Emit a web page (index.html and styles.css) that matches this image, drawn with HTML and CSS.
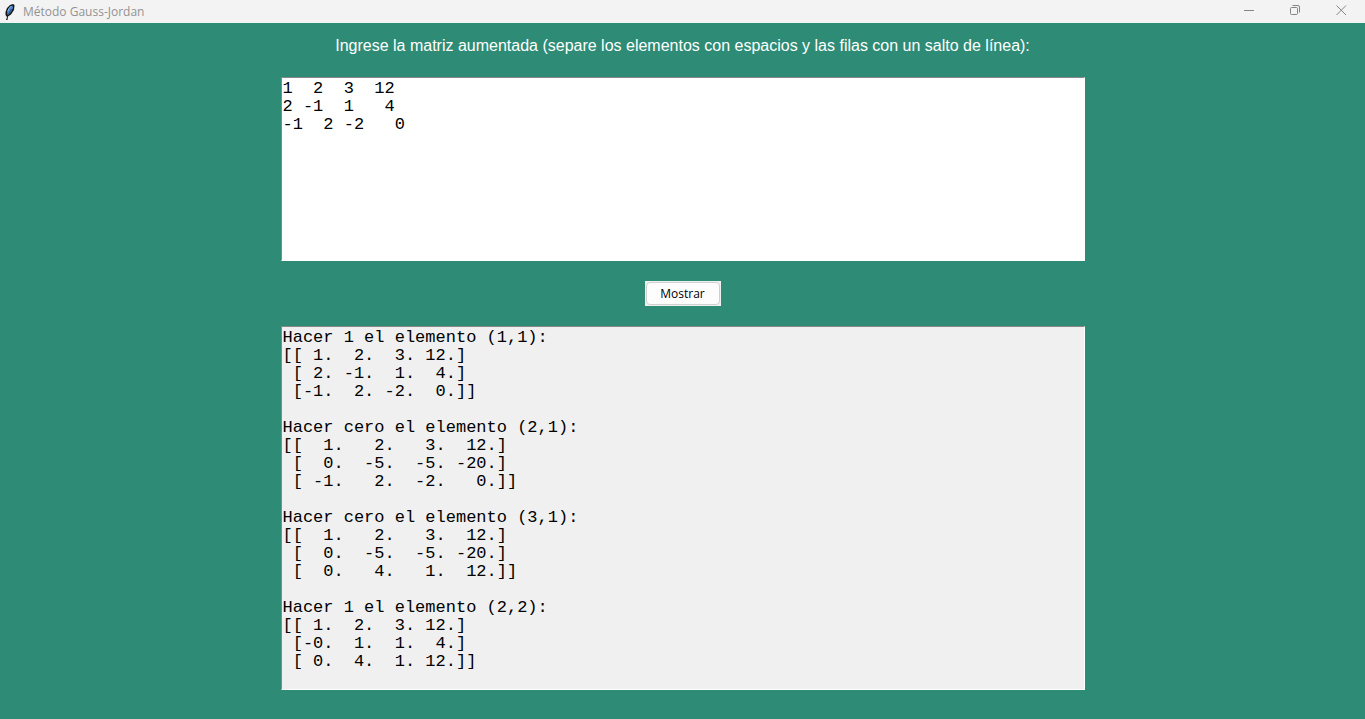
FILE: index.html
```html
<!DOCTYPE html>
<html lang="es">
<head>
<meta charset="utf-8">
<title>Método Gauss-Jordan</title>
<link rel="stylesheet" href="styles.css">
</head>
<body>
<header class="titlebar">
  <svg class="feather" width="12" height="18" viewBox="0 0 12 18" aria-hidden="true">
    <path d="M2 17L3 14L1.500 12V9L3 5L6 2L9 1L10.500 2L10 7L7 11.500L4 13.500L3.500 17Z" fill="#151515"/>
    <path d="M3 11L4 7L6 3.500L8.500 2.500L9 5L7 9L4.500 12Z" fill="#4f86cf"/>
    <path d="M3.500 8.500L5 5.500L7.500 3" fill="none" stroke="#8fbdf5"/>
    <path d="M3.500 13L7.500 6" fill="none" stroke="#1c2c48" stroke-width=".7"/>
  </svg>
  <span class="title">Método Gauss-Jordan</span>
  <button class="winbtn" aria-label="Minimizar"><svg width="11" height="11" viewBox="0 0 11 11"><path d="M0 5.500H10"/></svg></button>
  <button class="winbtn" aria-label="Restaurar"><svg width="11" height="11" viewBox="0 0 11 11"><rect x="0.500" y="2.500" width="7" height="7" rx="1"/><path d="M2.500 .5H8A1.500 1.500 0 0 1 9.500 2V7.500"/></svg></button>
  <button class="winbtn" aria-label="Cerrar"><svg width="11" height="11" viewBox="0 0 11 11"><path d="M.5 .5L10 10M10 .5L.5 10"/></svg></button>
</header>
<main class="content">
  <label class="prompt" for="matriz">Ingrese la matriz aumentada (separe los elementos con espacios y las filas con un salto de línea):</label>
  <textarea class="box" id="matriz" rows="10" spellcheck="false">1  2  3  12
2 -1  1   4
-1  2 -2   0</textarea>
  <div class="action"><button class="show" type="button">Mostrar</button></div>
  <textarea class="box output" rows="20" readonly spellcheck="false" aria-label="Resultado">Hacer 1 el elemento (1,1):
[[ 1.  2.  3. 12.]
 [ 2. -1.  1.  4.]
 [-1.  2. -2.  0.]]

Hacer cero el elemento (2,1):
[[  1.   2.   3.  12.]
 [  0.  -5.  -5. -20.]
 [ -1.   2.  -2.   0.]]

Hacer cero el elemento (3,1):
[[  1.   2.   3.  12.]
 [  0.  -5.  -5. -20.]
 [  0.   4.   1.  12.]]

Hacer 1 el elemento (2,2):
[[ 1.  2.  3. 12.]
 [-0.  1.  1.  4.]
 [ 0.  4.  1. 12.]]
</textarea>
</main>
</body>
</html>
```
FILE: styles.css
```css
* { box-sizing: border-box; }
body {
  margin: 0;
  min-height: 100vh;
  background: #2e8b75;
  font-family: "Liberation Sans", Arial, sans-serif;
}
.titlebar {
  display: flex;
  align-items: center;
  height: 23px;
  padding: 0 1px 0 4px;
  background: #f3f3f3;
  color: #929292;
}
.title {
  flex: 1;
  margin-left: 7px;
  font: 12px/22px "Open Sans", "Noto Sans", sans-serif;
}
.winbtn {
  display: flex;
  align-items: center;
  justify-content: center;
  width: 46px;
  height: 22px;
  padding: 0 0 2px;
  border: 0;
  background: none;
}
.winbtn svg {
  fill: none;
  stroke: #858585;
}
.content {
  display: flex;
  flex-direction: column;
  align-items: center;
  gap: 20px;
  padding: 12px 20px 20px;
}
.prompt {
  color: #fff;
  font-size: 16px;
  line-height: 22px;
}
.box {
  display: block;
  width: 804px;
  max-width: 100%;
  margin: 0;
  padding: 2px 1px 0;
  border: 1px solid #fff;
  border-top-color: #888;
  border-left-color: #888;
  border-radius: 0;
  outline: 0;
  resize: none;
  overflow: hidden;
  background: #fff;
  color: #000;
  font: 17px/18px "Liberation Mono", "Courier New", monospace;
}
.output { background: #f0f0f0; }
.action {
  display: flex;
  padding: 1px;
  background: #f0f0f0;
}
.show {
  width: 74px;
  height: 23px;
  padding: 0;
  border: 1px solid #d0d0d0;
  border-radius: 4px;
  background: #fdfdfd;
  color: #000;
  font: 12px/20px "Open Sans", "Noto Sans", sans-serif;
}
```
